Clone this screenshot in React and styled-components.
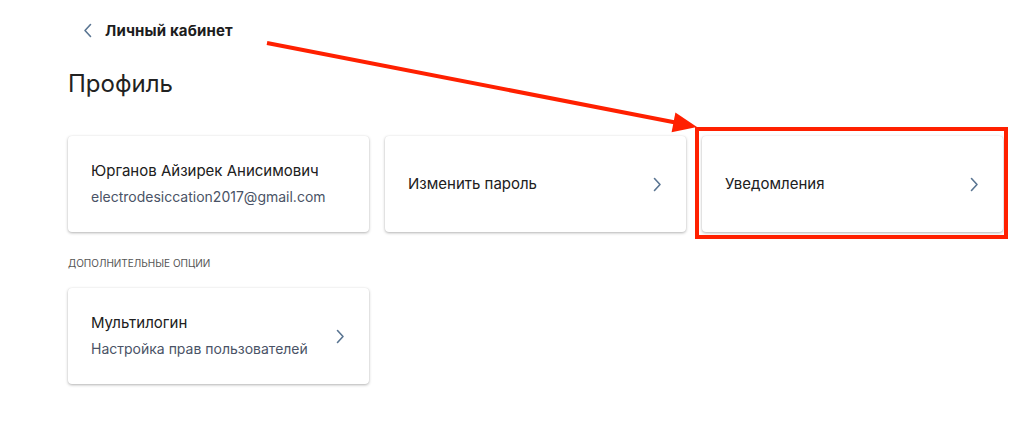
import React from "react";
import styled, { createGlobalStyle } from "styled-components";

const Global = createGlobalStyle`
  html, body { margin: 0; padding: 0; background: #fff; }
  body { font-family: Inter, "Noto Sans", sans-serif; color: #1f1f1f; }
`;

const Page = styled.div`
  position: relative;
  width: 1034px;
  height: 422px;
  box-sizing: border-box;
  padding: 19px 0 0 68px;
`;

const Back = styled.div`
  display: flex;
  align-items: center;
  gap: 12px;
  padding-left: 15px;
  height: 22px;
`;

const BackTitle = styled.span`
  font-size: 15px;
  font-weight: 700;
  letter-spacing: 0.15px;
  color: #1d1d1d;
`;

const PageTitle = styled.h1`
  margin: 28px 0 0;
  font-size: 24px;
  font-weight: 400;
  line-height: 30px;
  color: #222;
`;

const Grid = styled.div`
  display: grid;
  grid-template-columns: repeat(3, 301px);
  gap: 16px;
  margin-top: ${(p) => p.$top}px;
`;

const Card = styled.div`
  position: relative;
  height: 96px;
  box-sizing: border-box;
  padding: 0 24px 0 23px;
  display: flex;
  align-items: center;
  justify-content: space-between;
  background: #fff;
  border-radius: 4px;
  box-shadow: 0 1px 3px rgba(0, 0, 0, 0.3), 0 0 1px rgba(0, 0, 0, 0.08);
`;

const Texts = styled.div`
  display: flex;
  flex-direction: column;
  gap: ${(p) => p.$gap}px;
`;

const Title = styled.div`
  font-size: 15px;
  line-height: 18px;
  color: #202020;
`;

const Sub = styled.div`
  font-size: 14px;
  line-height: 18px;
  color: #4a5366;
`;

const Section = styled.div`
  margin-top: 25px;
  font-size: 10px;
  line-height: 12px;
  text-transform: uppercase;
  color: #555;
`;

const Highlight = styled.div`
  position: absolute;
  left: -7px;
  right: -5px;
  top: -9px;
  bottom: -7px;
  border: 4px solid #ff2000;
  pointer-events: none;
`;

const Overlay = styled.svg`
  position: absolute;
  left: 0;
  top: 0;
  pointer-events: none;
`;

const Chevron = ({ dir = "right" }) => (
  <svg width="10" height="15" viewBox="0 0 10 15" fill="none">
    <path
      d={dir === "right" ? "M2.5 1.5 L8 7.5 L2.5 13.5" : "M7.5 1.5 L2 7.5 L7.5 13.5"}
      stroke="#5a7592"
      strokeWidth="1.6"
      strokeLinecap="round"
      strokeLinejoin="round"
    />
  </svg>
);

export default function App() {
  return (
    <>
      <Global />
      <Page>
        <Back>
          <Chevron dir="left" />
          <BackTitle>Личный кабинет</BackTitle>
        </Back>
        <PageTitle>Профиль</PageTitle>
        <Grid $top={37}>
          <Card>
            <Texts $gap={8}>
              <Title>Юрганов Айзирек Анисимович</Title>
              <Sub>electrodesiccation2017@gmail.com</Sub>
            </Texts>
          </Card>
          <Card>
            <Title>Изменить пароль</Title>
            <Chevron />
          </Card>
          <Card>
            <Title>Уведомления</Title>
            <Chevron />
            <Highlight />
          </Card>
        </Grid>
        <Section>Дополнительные опции</Section>
        <Grid $top={19}>
          <Card>
            <Texts $gap={8}>
              <Title>Мультилогин</Title>
              <Sub>Настройка прав пользователей</Sub>
            </Texts>
            <Chevron />
          </Card>
        </Grid>
        <Overlay width="1034" height="422" viewBox="0 0 1034 422">
          <line x1="267" y1="43" x2="678" y2="123" stroke="#ff2000" strokeWidth="4" />
          <polygon points="697,127 675.4,112.6 671.6,132.2" fill="#ff2000" />
        </Overlay>
      </Page>
    </>
  );
}
